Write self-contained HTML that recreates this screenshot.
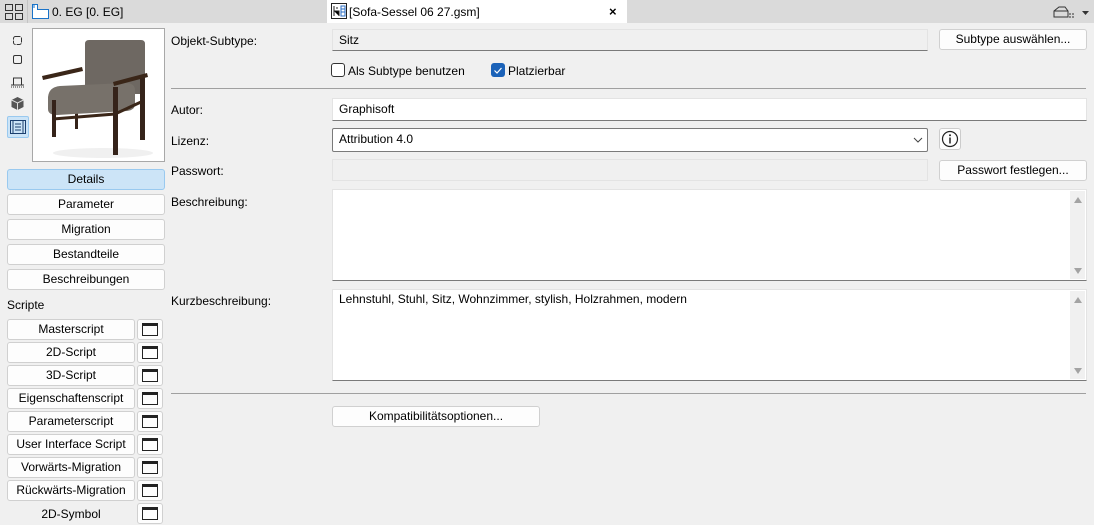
<!DOCTYPE html>
<html><head><meta charset="utf-8"><style>
*{box-sizing:border-box;margin:0;padding:0}
body{width:1094px;height:525px;overflow:hidden;background:#f0f0f0;font-family:"Liberation Sans",sans-serif;font-size:12px;color:#000;position:relative}
.a{position:absolute}
.btn{position:absolute;background:#fdfdfd;border:1px solid #d0d0d0;border-radius:3px;text-align:center;line-height:18px;font-size:12px}
.lbl{position:absolute;left:171px;font-size:12px}
.fld{position:absolute;border:1px solid #e3e3e3;border-bottom:1px solid #7a7a7a;padding-left:6px;line-height:20px}
.ib{position:absolute;left:137px;width:26px;height:21px;background:#fdfdfd;border:1px solid #d0d0d0;border-radius:3px}
.ib:after{content:"";position:absolute;left:4px;top:3px;width:16px;height:13px;border:1px solid #222;border-top:3px solid #222;box-sizing:border-box}
.hr{position:absolute;left:171px;width:915px;height:1px;background:#a0a0a0}
.sb{position:absolute;right:1px;top:1px;bottom:1px;width:15px;background:#f0f0f0}
.up,.dn{position:absolute;left:4px;width:0;height:0;border-left:4px solid transparent;border-right:4px solid transparent}
.up{top:6px;border-bottom:6px solid #a3a3a3}
.dn{bottom:5px;border-top:6px solid #a3a3a3}
</style></head><body>
<div class="a" style="left:0;top:0;width:1094px;height:23px;background:#dadada"></div>
<div class="a" style="left:27px;top:0;width:1px;height:23px;background:#c4c4c4"></div>
<svg class="a" style="left:5px;top:4px" width="18" height="16"><rect x="0.5" y="0.5" width="7" height="6" fill="none" stroke="#333"/><rect x="10.5" y="0.5" width="7" height="6" fill="none" stroke="#333"/><rect x="0.5" y="9.5" width="7" height="6" fill="none" stroke="#333"/><rect x="10.5" y="9.5" width="7" height="6" fill="none" stroke="#333"/></svg>
<svg class="a" style="left:31px;top:3px" width="20" height="16"><path d="M1.5 1.5h5v5h11v9h-16z" fill="#fff" stroke="#1a73c8"/><path d="M3 2v3" stroke="#1a73c8"/></svg>
<div class="a" style="left:52px;top:5px">0. EG [0. EG]</div>
<div class="a" style="left:327px;top:0;width:300px;height:23px;background:#fff"></div>
<svg class="a" style="left:331px;top:3px" width="16" height="16"><rect x="0.5" y="0.5" width="15" height="15" fill="#fff" stroke="#222"/><path d="M3 3v10M3 8h5v5M5 5h2" stroke="#222"/><path d="M10 3h4v10h-4zM10 6h4M10 9h4" fill="none" stroke="#2a6ec6"/></svg>
<div class="a" style="left:349px;top:5px">[Sofa-Sessel 06 27.gsm]</div>
<div class="a" style="left:609px;top:4px;font-weight:bold;font-size:13px">×</div>
<svg class="a" style="left:1053px;top:5px" width="40" height="14"><path d="M1 12V6l5-4h6l3 4v6zM1 6h14" fill="none" stroke="#333"/><path d="M16 9h2M16 12h2M19 9h2M19 12h2" stroke="#333"/><path d="M29 6h7l-3.5 4z" fill="#333"/></svg>

<svg class="a" style="left:11px;top:35px" width="14" height="100">
<rect x="2.5" y="1.5" width="8" height="8" rx="2" fill="none" stroke="#333" stroke-dasharray="5 1"/>
<rect x="2.5" y="20.5" width="8" height="8" rx="1.5" fill="none" stroke="#333"/>
<path d="M2.5 50v-7h8v7M0 50h13" fill="none" stroke="#333"/><path d="M0 52h13" stroke="#333" stroke-dasharray="1 1"/>
<path d="M6.5 62l6 3v7l-6 3-6-3v-7z" fill="#555"/><path d="M0.5 65l6 3 6-3M6.5 68v7" fill="none" stroke="#ddd"/>
</svg>
<div class="a" style="left:7px;top:116px;width:22px;height:22px;background:#cce4f7;border:1px solid #99c9ef;border-radius:2px"></div>
<svg class="a" style="left:10px;top:119px" width="16" height="16"><rect x="0.5" y="1.5" width="15" height="13" fill="none" stroke="#1b3f6e"/><path d="M3 2v12M13 2v12M5 5h6M5 8h6M5 11h6" stroke="#1b3f6e"/></svg>

<div class="a" style="left:32px;top:28px;width:133px;height:134px;background:#fff;border:1px solid #a8a8a8"></div>
<svg class="a" style="left:33px;top:29px" width="131" height="132">
<ellipse cx="70" cy="124" rx="50" ry="5" fill="#f0f0f0"/>
<path d="M52 15q0-4 4-4h52q4 0 4 4v50H52z" fill="#6e6862"/>
<path d="M107 46h5v65h-5zM42 71h3v29h-3z" fill="#35231a"/>
<path d="M15 68q1-10 12-11l65-3q10 0 10 7v14q0 6-8 7l-70 4q-9 0-9-6z" fill="#77716a"/>
<path d="M20 90l62-5 26-12" fill="none" stroke="#3a2618" stroke-width="3"/>
<path d="M9 47l40-9 1 4-40 9z" fill="#3a2618"/>
<path d="M80 53l34-9 1 4-34 9z" fill="#3a2618"/>
<path d="M19 71h4v37h-4zM80 58h5v68h-5z" fill="#35231a"/>
</svg>

<div class="btn" style="left:7px;top:169px;width:158px;height:21px;background:#cce4f7;border-color:#99c9ef">Details</div>
<div class="btn" style="left:7px;top:194px;width:158px;height:21px">Parameter</div>
<div class="btn" style="left:7px;top:219px;width:158px;height:21px">Migration</div>
<div class="btn" style="left:7px;top:244px;width:158px;height:21px">Bestandteile</div>
<div class="btn" style="left:7px;top:269px;width:158px;height:21px">Beschreibungen</div>
<div class="a" style="left:7px;top:298px">Scripte</div>
<div class="btn" style="left:7px;top:319px;width:128px;height:21px">Masterscript</div><div class="ib" style="top:319px"></div>
<div class="btn" style="left:7px;top:342px;width:128px;height:21px">2D-Script</div><div class="ib" style="top:342px"></div>
<div class="btn" style="left:7px;top:365px;width:128px;height:21px">3D-Script</div><div class="ib" style="top:365px"></div>
<div class="btn" style="left:7px;top:388px;width:128px;height:21px">Eigenschaftenscript</div><div class="ib" style="top:388px"></div>
<div class="btn" style="left:7px;top:411px;width:128px;height:21px">Parameterscript</div><div class="ib" style="top:411px"></div>
<div class="btn" style="left:7px;top:434px;width:128px;height:21px">User Interface Script</div><div class="ib" style="top:434px"></div>
<div class="btn" style="left:7px;top:457px;width:128px;height:21px">Vorwärts-Migration</div><div class="ib" style="top:457px"></div>
<div class="btn" style="left:7px;top:480px;width:128px;height:21px">Rückwärts-Migration</div><div class="ib" style="top:480px"></div>
<div class="a" style="left:7px;top:507px;width:128px;text-align:center">2D-Symbol</div><div class="ib" style="top:503px"></div>

<div class="lbl" style="top:34px">Objekt-Subtype:</div>
<div class="fld" style="left:332px;top:29px;width:596px;height:22px;background:#f0f0f0">Sitz</div>
<div class="btn" style="left:939px;top:29px;width:148px;height:21px">Subtype auswählen...</div>
<div class="a" style="left:331px;top:63px;width:14px;height:14px;border:1px solid #333;border-radius:3px;background:#fff"></div>
<div class="a" style="left:348px;top:64px">Als Subtype benutzen</div>
<div class="a" style="left:491px;top:63px;width:14px;height:14px;border-radius:3px;background:#1b62b8"></div>
<svg class="a" style="left:491px;top:63px" width="14" height="14"><path d="M3.5 7.5l2.5 2.5 4.5-5" fill="none" stroke="#fff" stroke-width="1.2"/></svg>
<div class="a" style="left:508px;top:64px">Platzierbar</div>
<div class="hr" style="top:88px"></div>

<div class="lbl" style="top:103px">Autor:</div>
<div class="fld" style="left:332px;top:98px;width:755px;height:23px;background:#fff">Graphisoft</div>
<div class="lbl" style="top:134px">Lizenz:</div>
<div class="fld" style="left:332px;top:128px;width:596px;height:24px;background:#fff;border:1px solid #7a7a7a;border-radius:2px">Attribution 4.0</div>
<svg class="a" style="left:913px;top:136px" width="10" height="8"><path d="M1 2l4 4 4-4" fill="none" stroke="#444"/></svg>
<div class="a" style="left:939px;top:128px;width:22px;height:22px;background:#fdfdfd;border:1px solid #ccc;border-radius:3px"></div>
<svg class="a" style="left:941px;top:130px" width="18" height="18"><circle cx="9" cy="9" r="7.5" fill="none" stroke="#222" stroke-width="1.2"/><circle cx="9" cy="5.3" r="1" fill="#222"/><path d="M9 7.5v6" stroke="#222" stroke-width="1.5"/></svg>
<div class="lbl" style="top:164px">Passwort:</div>
<div class="fld" style="left:332px;top:159px;width:596px;height:22px;background:#f0f0f0;border-bottom-color:#e3e3e3"></div>
<div class="btn" style="left:939px;top:160px;width:148px;height:21px">Passwort festlegen...</div>
<div class="lbl" style="top:195px">Beschreibung:</div>
<div class="fld" style="left:332px;top:189px;width:755px;height:92px;background:#fff"><div class="sb"><div class="up"></div><div class="dn"></div></div></div>
<div class="lbl" style="top:294px">Kurzbeschreibung:</div>
<div class="fld" style="left:332px;top:289px;width:755px;height:92px;background:#fff;line-height:18px">Lehnstuhl, Stuhl, Sitz, Wohnzimmer, stylish, Holzrahmen, modern<div class="sb"><div class="up"></div><div class="dn"></div></div></div>
<div class="hr" style="top:393px"></div>
<div class="btn" style="left:332px;top:406px;width:208px;height:21px">Kompatibilitätsoptionen...</div>
</body></html>
